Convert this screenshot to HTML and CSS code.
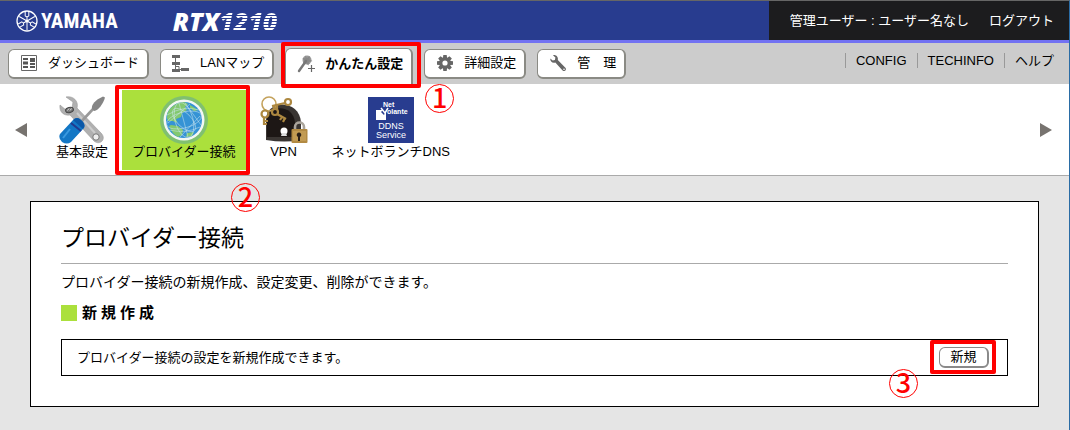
FILE: index.html
```html
<!DOCTYPE html>
<html lang="ja">
<head>
  <meta charset="UTF-8" />
  <meta name="viewport" content="width=device-width, initial-scale=1" />
  <title>プロバイダー接続 - RTX1210</title>
  <link rel="stylesheet" href="styles.css">
</head>
<body>

<header class="header">
  <div class="brand">
    <svg class="brand-mark" viewBox="0 0 22 22" aria-hidden="true">
      <circle cx="11" cy="11" r="10" fill="none" stroke="#fff" stroke-width="1.3"/>
      <g id="fork" fill="none" stroke="#fff" stroke-width="1">
        <path d="M11 11V6.5M9.2 1.8V6.2Q11 7.4 12.8 6.2V1.8M11 11V20"/>
      </g>
      <use href="#fork" transform="rotate(120 11 11)"/>
      <use href="#fork" transform="rotate(240 11 11)"/>
      <circle cx="11" cy="11" r="1.6" fill="#fff"/>
    </svg>
    <span class="brand-name">YAMAHA</span>
    <span class="model">RTX<span class="model-number">1210</span></span>
  </div>
  <div class="user">
    <span>管理ユーザー : ユーザー名なし</span>
    <a href="#logout">ログアウト</a>
  </div>
</header>

<div class="bar">
  <nav class="tabs">
    <a class="tab" href="#dashboard">
      <svg class="tab-icon" viewBox="0 0 20 20" aria-hidden="true">
        <path d="M2.5 2.5h15v15h-15z" fill="#fff" stroke="#666"/>
        <path d="M4 5h5v2H4zM4 8.500h5v3H4zM4 13h5v2H4zM11 5h5v4h-5zM11 10h5v2h-5zM11 13h5v2h-5z" fill="#555"/>
      </svg>
      ダッシュボード
    </a>
    <a class="tab" href="#lanmap">
      <svg class="tab-icon" viewBox="0 0 20 20" aria-hidden="true">
        <path d="M1 2h8v3H1zM1 9h8v3H1zM1 16h8v3H1zM10 15h8v3h-8z" fill="#666"/>
        <path d="M4.500 5v11M4.500 13.500h3.500v3h3" fill="none" stroke="#666"/>
      </svg>
      LANマップ
    </a>
    <a class="tab active" href="#easy">
      <svg class="tab-icon" viewBox="0 0 20 20" aria-hidden="true">
        <circle cx="11" cy="6" r="4.500" fill="#999"/>
        <path d="M9 1.500l2 2.500 3-2-.5 3.500 3 1.500-3.500 1-.5 3.500-2.500-2.500-3 .5 1-3-1.500-2.500 3 .2z" fill="#888"/>
        <path d="M10 7L3 17" stroke="#777" stroke-width="2.400" stroke-linecap="round"/>
        <path d="M15.500 11v7M12 14.500h7" stroke="#666" stroke-width="1.200"/>
      </svg>
      かんたん設定
      <span class="mark mark-tab"></span>
      <span class="step step-tab">1</span>
    </a>
    <a class="tab" href="#detail">
      <svg class="tab-icon" viewBox="0 0 20 20" aria-hidden="true">
        <g fill="#666">
          <path id="tooth" d="M8.300 2h3.400l.5 4H7.800zM8.300 18h3.400l.5-4H7.800z"/>
          <use href="#tooth" transform="rotate(45 10 10)"/>
          <use href="#tooth" transform="rotate(90 10 10)"/>
          <use href="#tooth" transform="rotate(135 10 10)"/>
        </g>
        <circle cx="10" cy="10" r="4.200" fill="none" stroke="#666" stroke-width="3.200"/>
      </svg>
      詳細設定
    </a>
    <a class="tab" href="#manage">
      <svg class="tab-icon" viewBox="0 0 20 20" aria-hidden="true">
        <path d="M5 2.200C8 1.500 10.500 4 9.800 7l7.600 7.800c1.700 2-.9 4.400-2.800 2.700L7.300 9.500C4.500 10.500 2 8.300 2.300 5.500l2.400 2 2.200-.6.500-2.300z" fill="#666"/>
        <circle cx="16" cy="16.200" r=".8" fill="#fff"/>
      </svg>
      管　理
    </a>
  </nav>
  <ul class="links">
    <li><a href="#config">CONFIG</a></li>
    <li><a href="#techinfo">TECHINFO</a></li>
    <li><a href="#help">ヘルプ</a></li>
  </ul>
</div>

<div class="menu">
  <button class="arrow" type="button" aria-label="前へ">
    <svg viewBox="0 0 12 14"><path d="M12 0v14L0 7z" fill="#77736f"/></svg>
  </button>
  <nav class="items">
    <a class="item" href="#basic">
      <svg class="item-icon" viewBox="0 0 48 48" aria-hidden="true">
        <path d="M8 1C15-.5 21 5 19 12l24 25c6 6-1 13-7 8L12 19C6 20 1 16 2 9l6 5 6-2 1-6z" fill="#b0b0b0" stroke="#999" stroke-width=".6"/>
        <path d="M19 17l18 20" stroke="#ccc" stroke-width="2"/>
        <ellipse cx="11.500" cy="14" rx="4" ry="2.600" fill="#777" stroke="#444" transform="rotate(-15 11.500 14)"/>
        <path d="M9.500 14.500l1.500-2M12 14.500l1.500-2" stroke="#ddd"/>
        <circle cx="38" cy="41" r="3.200" fill="#eee" stroke="#777"/>
        <path d="M22 27L36 12" stroke="#999" stroke-width="2.600"/>
        <path d="M34 13c-1-4 3-9 11-12.500l2 1C45 8 41 14 36 15z" fill="#858585"/>
        <path d="M15 24q4-4 8 0l2 2q3 4 0 7L13 46q-4 3-9 0-4-4-2-8z" fill="#1377c5"/>
        <path d="M15 24q4-4 8 0l2 2q3 4 0 7z" fill="#0b58a8"/>
        <path d="M13 27l10 8" stroke="#223a8f" stroke-width="2"/>
        <path d="M12 33L5 42" stroke="#3a9ae0" stroke-width="2"/>
      </svg>
      <span class="item-label">基本設定</span>
    </a>
    <a class="item current" href="#provider">
      <svg class="item-icon" viewBox="0 0 48 48" aria-hidden="true">
        <circle cx="24" cy="24" r="24" fill="#80c070"/>
        <circle cx="24" cy="24" r="20.500" fill="#f3f7f3"/>
        <circle cx="24" cy="24" r="18" fill="#3593d5"/>
        <path d="M7.500 17C11 10 17 6 24 6l4 2-3 3 2 3-5 3-1 4-5 2 1 4-4-2-5 0-1-3z" fill="#83c86f"/>
        <path d="M11 29l7 1 5 4-1 5-4 2c-4-2-7-6-9-11zM27 37l7-1-2 4-6 1zM30 9l8 5-4 1-4-3z" fill="#83c86f"/>
        <g fill="none" stroke="#cfe8f0" stroke-width=".5">
          <ellipse cx="24" cy="24" rx="9" ry="18" transform="rotate(-15 24 24)"/>
          <ellipse cx="24" cy="24" rx="18" ry="8" transform="rotate(-15 24 24)"/>
          <ellipse cx="24" cy="24" rx="15" ry="7" transform="rotate(45 24 24)"/>
          <path d="M7 19Q24 9 39 14M9 34q17 4 31-3M25 7l16 22M8 27l22-19M20 41l20-21M19 7l9 34"/>
        </g>
      </svg>
      <span class="item-label">プロバイダー接続</span>
      <span class="mark mark-item"></span>
      <span class="step step-item">2</span>
    </a>
    <a class="item" href="#vpn">
      <svg class="item-icon" viewBox="0 0 48 48" aria-hidden="true">
        <path d="M6 44V24C6 3 40 3 41 27v17q-16 3-35 0z" fill="#3a3532"/>
        <path d="M7 41V24C8 8 34 8 35 27v14z" fill="#1d1715"/>
        <circle cx="24" cy="35" r="3.500" fill="#fff"/>
        <path d="M22 37h4l1 3h-6z" fill="#ddd"/>
        <g fill="none" stroke="#ad8840" stroke-width="2.200">
          <circle cx="9" cy="8" r="7" stroke="#c4a25c" stroke-width="1.600"/>
          <circle cx="28" cy="6" r="3"/>
          <path d="M25 7l-13 3M17 9v4M14 10v3"/>
          <circle cx="5" cy="18" r="3.500"/>
          <path d="M4 21v8M4 25h4M4 28h3"/>
          <circle cx="15" cy="16" r="3"/>
          <path d="M17 18l9 5M22 21l-2 3M25 22l-2 4"/>
        </g>
        <path d="M35 34v-3c0-6 9-6 9 0v3" fill="none" stroke="#aaa49b" stroke-width="2.600"/>
        <rect x="31.500" y="33" width="16" height="14" rx="1" fill="#b28a42"/>
        <path d="M33 35h13v10H33z" fill="#c29b53"/>
        <path d="M37 40a2.300 2.300 0 1 1 4 0l-1 1v4h-2v-4z" fill="#2b2017"/>
      </svg>
      <span class="item-label">VPN</span>
    </a>
    <a class="item" href="#ddns">
      <svg class="item-icon" viewBox="0 0 48 48" aria-hidden="true">
        <rect x="1" y="1" width="46" height="46" fill="#283c8f"/>
        <path d="M9 14h7l-2 2 3 3 2-4v9H9z" fill="#fff"/>
        <path d="M14 12l4 5 3-5" fill="none" stroke="#fff" stroke-width="1.500"/>
        <text class="logo-small" x="16" y="11">Net</text>
        <text class="logo-small" x="20" y="18">olante</text>
        <text class="logo-text" x="24" y="33">DDNS</text>
        <text class="logo-text" x="24" y="42">Service</text>
      </svg>
      <span class="item-label">ネットボランチDNS</span>
    </a>
  </nav>
  <button class="arrow" type="button" aria-label="次へ">
    <svg viewBox="0 0 12 14"><path d="M0 0v14l12-7z" fill="#77736f"/></svg>
  </button>
</div>

<main class="main">
  <section class="card">
    <h1>プロバイダー接続</h1>
    <p>プロバイダー接続の新規作成、設定変更、削除ができます。</p>
    <h2>新規作成</h2>
    <div class="row">
      <span id="new-label">プロバイダー接続の設定を新規作成できます。</span>
      <div class="row-action">
        <button class="button" type="button" aria-describedby="new-label">新規</button>
        <span class="mark mark-button"></span>
        <span class="step step-button">3</span>
      </div>
    </div>
  </section>
</main>

</body>
</html>
```
FILE: styles.css
```css
* {
  box-sizing: border-box;
}

body {
  margin: 0;
  min-height: 100vh;
  background: #e5e5e5;
  border-top: 1px solid #666;
  border-right: 1px solid #2a6ca5;
  font-family: "Liberation Sans", "Noto Sans CJK JP", sans-serif;
  font-size: 13px;
  line-height: 16px;
  color: #000;
}

a {
  color: inherit;
  text-decoration: none;
}

button {
  font: inherit;
  color: inherit;
  cursor: pointer;
}

/* header */
.header {
  display: flex;
  justify-content: space-between;
  height: 42px;
  background: #283c8f;
  border-bottom: 3px solid #7272f2;
}

.brand {
  display: flex;
  align-items: center;
  padding-left: 16px;
  color: #fff;
}

.brand-mark {
  width: 22px;
  height: 22px;
}

.brand-name {
  margin-left: 3px;
  font-family: "Roboto Condensed", Roboto, sans-serif;
  font-size: 21px;
  font-weight: 700;
}

.model {
  margin-left: 55px;
  font-family: "Open Sans", sans-serif;
  font-size: 25px;
  font-weight: 800;
  font-style: italic;
  line-height: 32px;
}

.model-number {
  background: repeating-linear-gradient(#fff 0, #fff 2px, #283c8f 2px, #283c8f 3px);
  -webkit-background-clip: text;
  background-clip: text;
  color: transparent;
}

.user {
  display: flex;
  align-items: center;
  gap: 20px;
  padding: 0 15px 0 21px;
  background: #1c1c1e;
  color: #fff;
}

/* tabs */
.bar {
  display: flex;
  justify-content: space-between;
  height: 41px;
  padding: 5px 15px 0 8px;
  background: #ccc;
}

.tabs {
  display: flex;
  gap: 11px;
}

.tab {
  position: relative;
  display: flex;
  align-items: center;
  gap: 9px;
  margin: 1px 0 5px;
  padding: 0 8px 2px 10px;
  background: #fff;
  border: 1px solid #8a8a84;
  border-right-width: 2px;
  border-bottom-width: 2px;
  border-radius: 6px;
  white-space: nowrap;
}

.tab-icon {
  width: 20px;
  height: 20px;
}

.tab.active {
  margin: 0;
  padding-bottom: 6px;
  border-bottom: 0;
  border-radius: 6px 6px 0 0;
  font-weight: bold;
}

.links {
  display: flex;
  margin: 5px 0 0;
  padding: 0;
  list-style: none;
}

.links li {
  height: 15px;
  padding-left: 10px;
  border-left: 1px solid #999;
  line-height: 15px;
}

.links li + li {
  margin-left: 10px;
}

/* icon menu */
.menu {
  display: flex;
  align-items: center;
  gap: 19px;
  padding: 6px 17px 5px 15px;
  background: #fff;
  border-bottom: 1px solid #aaa;
}

.arrow {
  width: 12px;
  height: 14px;
  padding: 0;
  background: none;
  border: 0;
}

.arrow svg {
  display: block;
}

.items {
  display: flex;
  flex: 1;
  gap: 4px;
}

.item {
  position: relative;
  display: flex;
  flex-direction: column;
  align-items: center;
  padding: 6px 10px 10px;
}

.item.current {
  background: #abe03c;
}

.item-icon {
  width: 48px;
  height: 48px;
}

.item-label {
  line-height: 16px;
  white-space: nowrap;
}

.logo-small {
  fill: #fff;
  font-size: 7px;
  font-weight: bold;
}

.logo-text {
  fill: #fff;
  font-size: 9px;
  text-anchor: middle;
}

/* content */
.main {
  padding: 25px 30px 23px;
}

.card {
  padding: 18px 30px 30px;
  background: #fff;
  border: 1px solid #000;
}

h1 {
  margin: 0;
  padding-bottom: 7px;
  border-bottom: 1px solid #aaa;
  font-size: 23px;
  font-weight: normal;
  line-height: 36px;
}

p {
  margin: 8px 0 11px;
  font-size: 14px;
  line-height: 20px;
}

h2 {
  display: flex;
  align-items: center;
  gap: 5px;
  margin: 0 0 16px;
  font-size: 15px;
  line-height: 20px;
  letter-spacing: 4px;
}

h2::before {
  content: "";
  width: 16px;
  height: 16px;
  background: #abe03c;
}

.row {
  display: flex;
  align-items: center;
  justify-content: space-between;
  padding: 7px 18px 7px 15px;
  border: 1px solid #000;
}

.row-action {
  position: relative;
}

.button {
  display: block;
  width: 50px;
  height: 21px;
  padding: 0;
  background: #fff;
  border: 1px solid #8a8a8a;
  border-right-width: 2px;
  border-bottom-width: 2px;
  border-radius: 6px;
  line-height: 16px;
}

/* red guide marks */
.mark {
  position: absolute;
  z-index: 1;
  border: 4px solid #f00;
  border-radius: 2px;
  pointer-events: none;
}

.mark-tab {
  inset: -7px -10px -4px -5px;
}

.mark-item {
  inset: -5px -4px -5px -7px;
}

.mark-button {
  inset: -7px -7px -6px -9px;
}

.step {
  position: absolute;
  z-index: 2;
  width: 29px;
  height: 29px;
  border: 1px solid #f00;
  border-radius: 50%;
  color: #f00;
  font-family: "Noto Sans CJK JP", sans-serif;
  font-size: 27px;
  font-weight: 500;
  line-height: 24px;
  text-align: center;
}

.step-tab {
  top: 35px;
  left: 139px;
}

.step-item {
  top: 93px;
  left: 109px;
}

.step-button {
  top: 22px;
  left: -50px;
}
```
